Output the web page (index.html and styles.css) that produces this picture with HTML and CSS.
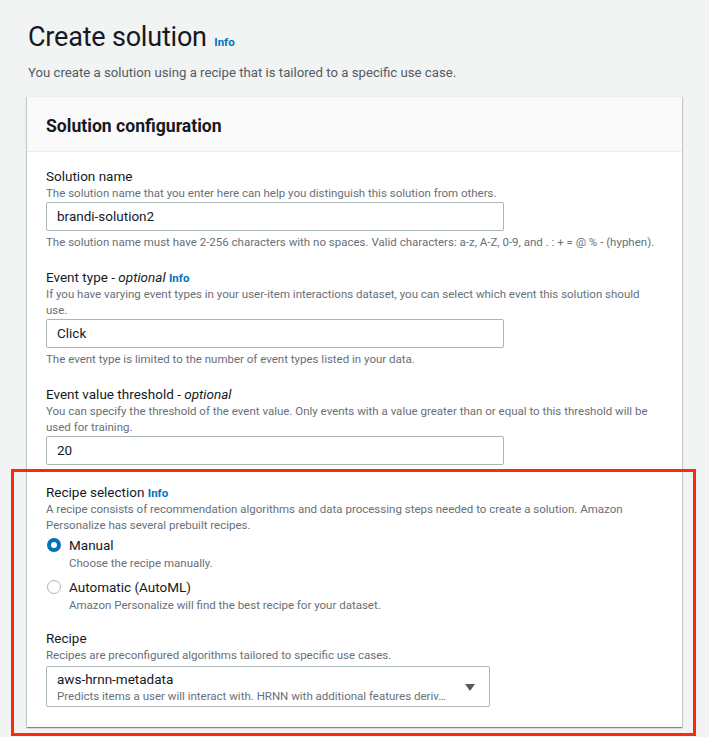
FILE: index.html
```html
<!DOCTYPE html>
<html lang="en">
<head>
<meta charset="utf-8">
<title>Create solution</title>
<link rel="stylesheet" href="styles.css">
</head>
<body>
<div class="page">
  <header class="page-header">
    <h1 class="title">Create solution <a class="info info-lg" href="#">Info</a></h1>
    <p class="subtitle">You create a solution using a recipe that is tailored to a specific use case.</p>
  </header>

  <section class="card">
    <div class="card-header">
      <h2>Solution configuration</h2>
    </div>
    <div class="card-body">
      <div class="field">
        <div class="label">Solution name</div>
        <div class="desc">The solution name that you enter here can help you distinguish this solution from others.</div>
        <div class="input">brandi-solution2</div>
        <div class="constraint">The solution name must have 2-256 characters with no spaces. Valid characters: a-z, A-Z, 0-9, and . : + = @ % - (hyphen).</div>
      </div>

      <div class="field">
        <div class="label">Event type - <i>optional</i> <a class="info" href="#">Info</a></div>
        <div class="desc">If you have varying event types in your user-item interactions dataset, you can select which event this solution should use.</div>
        <div class="input">Click</div>
        <div class="constraint">The event type is limited to the number of event types listed in your data.</div>
      </div>

      <div class="field">
        <div class="label">Event value threshold - <i>optional</i></div>
        <div class="desc">You can specify the threshold of the event value. Only events with a value greater than or equal to this threshold will be used for training.</div>
        <div class="input">20</div>
      </div>

      <div class="field field-recipe-sel">
        <div class="label">Recipe selection <a class="info" href="#">Info</a></div>
        <div class="desc">A recipe consists of recommendation algorithms and data processing steps needed to create a solution. Amazon Personalize has several prebuilt recipes.</div>
        <div class="radios">
          <div class="radio">
            <span class="dot checked"></span>
            <div class="radio-text">
              <div class="radio-label">Manual</div>
              <div class="desc">Choose the recipe manually.</div>
            </div>
          </div>
          <div class="radio">
            <span class="dot"></span>
            <div class="radio-text">
              <div class="radio-label">Automatic (AutoML)</div>
              <div class="desc">Amazon Personalize will find the best recipe for your dataset.</div>
            </div>
          </div>
        </div>
      </div>

      <div class="field field-recipe">
        <div class="label">Recipe</div>
        <div class="desc">Recipes are preconfigured algorithms tailored to specific use cases.</div>
        <div class="select">
          <div class="select-text">
            <div class="select-value">aws-hrnn-metadata</div>
            <div class="select-desc">Predicts items a user will interact with. HRNN with additional features deriv…</div>
          </div>
          <svg class="caret" width="10" height="8" viewBox="0 0 10 8"><path d="M0 0 H10 L5 7 Z" fill="#545b64"/></svg>
        </div>
      </div>
    </div>
  </section>
  <div class="highlight"></div>
</div>
</body>
</html>
```

FILE: styles.css
```css
* { box-sizing: border-box; }
html, body { margin: 0; padding: 0; }
body {
  background: #f2f3f3;
  font-family: Roboto, "Noto Sans", Arial, sans-serif;
  color: #16191f;
  width: 709px;
  height: 737px;
  overflow: hidden;
}
.page {
  position: relative;
  padding: 19px 27px 0 27px;
}
.page-header { padding-left: 1px; }
.title {
  margin: 0;
  font-size: 27px;
  line-height: 36px;
  font-weight: 400;
  color: #16191f;
  letter-spacing: -0.2px;
}
.info {
  color: #0073bb;
  font-weight: 700;
  font-size: 11.5px;
  line-height: 1;
  text-decoration: none;
  letter-spacing: 0;
  display: inline-block;
}
.info-lg { font-size: 11.5px; margin-left: 1px; }
.subtitle {
  margin: 8px 0 0 0;
  font-size: 13.2px;
  line-height: 20px;
  color: #545b64;
}
.card {
  margin-top: 13px;
  background: #fff;
  border-top: 1px solid #eaeded;
  box-shadow: 0 1px 1px 0 rgba(0,28,36,0.3), 1px 1px 1px 0 rgba(0,28,36,0.15), -1px 1px 1px 0 rgba(0,28,36,0.15);
}
.card-header {
  background: #fafafa;
  border-bottom: 1px solid #eaeded;
  padding: 18px 19px 14px 19px;
}
.card-header h2 {
  margin: 0;
  font-size: 17.6px;
  line-height: 22px;
  font-weight: 700;
}
.card-body {
  padding: 15px 19px 20px 19px;
  display: flex;
  flex-direction: column;
  gap: 18px;
}
.label {
  font-size: 13.5px;
  line-height: 18px;
}
.label i { font-style: italic; }
.desc {
  font-size: 11.5px;
  line-height: 16px;
  color: #687078;
  padding-right: 10px;
}
.input {
  margin-top: 1px;
  width: 458px;
  height: 29px;
  border: 1px solid #aab7b8;
  border-radius: 2px;
  background: #fff;
  padding: 0 10px;
  font-size: 13.5px;
  line-height: 27px;
}
.constraint {
  margin-top: 3px;
  font-size: 11.5px;
  line-height: 16px;
  color: #687078;
}
.radios {
  display: flex;
  flex-direction: column;
  gap: 6px;
  margin-top: 2px;
}
.radio {
  display: flex;
  align-items: flex-start;
  gap: 8px;
  padding-left: 1px;
}
.dot {
  flex: none;
  width: 14px;
  height: 14px;
  border-radius: 50%;
  border: 1px solid #aab7b8;
  margin-top: 3px;
  background: #fff;
}
.dot.checked {
  border: 4px solid #0073bb;
}
.radio-label {
  font-size: 13.5px;
  line-height: 20px;
}
.field-recipe { margin-top: -2px; }
.select {
  margin-top: 3px;
  width: 444px;
  height: 41px;
  border: 1px solid #aab7b8;
  border-radius: 2px;
  display: flex;
  align-items: center;
  justify-content: space-between;
  padding: 0 14px 0 10px;
}
.select-value {
  font-size: 13.5px;
  line-height: 18px;
}
.select-desc {
  font-size: 11.5px;
  line-height: 16px;
  color: #687078;
  white-space: nowrap;
}
.caret { margin-top: 2px; }
.highlight {
  position: absolute;
  left: 11px;
  top: 469px;
  width: 685px;
  height: 267px;
  border: 3px solid #fa2a0a;
  pointer-events: none;
}
```
